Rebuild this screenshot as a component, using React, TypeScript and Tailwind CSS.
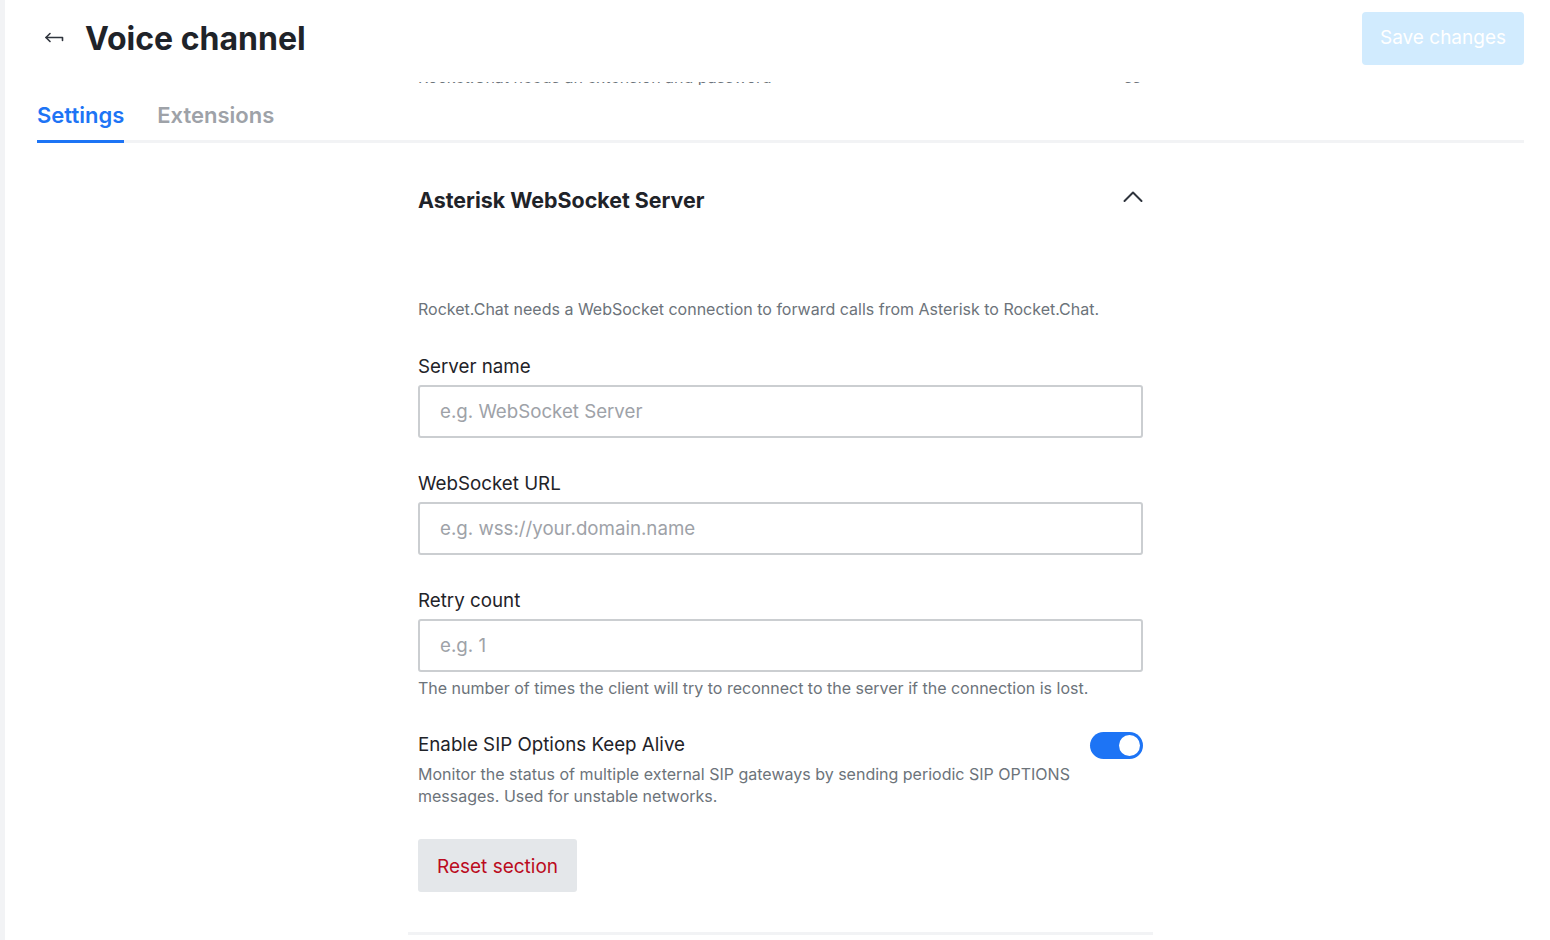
import React from "react";

function Field({ label, placeholder }: { label: string; placeholder: string }) {
  return (
    <div className="flex flex-col">
      <label className="text-[18.75px] leading-[24px] text-[#1f2329]">{label}</label>
      <div className="mt-[6px] h-[53px] rounded-[3px] border-2 border-[#cbced1] flex items-center px-[20px]">
        <span className="text-[18.7px] text-[#9ea2a8] mt-[2px]">{placeholder}</span>
      </div>
    </div>
  );
}

export default function App() {
  return (
    <div
      className="flex w-[1550px] h-[940px] bg-white overflow-hidden"
      style={{ fontFamily: "Inter, 'Noto Sans', sans-serif" }}
    >
      <div className="w-[5px] shrink-0 bg-[#f2f3f5]" />
      <div className="flex-1 flex flex-col pl-[32px] pr-[26px]">
        {/* header */}
        <div className="flex items-center justify-between pt-[12px]">
          <div className="flex items-center h-[53px]">
            <svg width="24" height="24" viewBox="0 0 24 24" className="ml-[6px]" fill="none" stroke="#2f343d" strokeWidth="1.6" strokeLinecap="round" strokeLinejoin="round">
              <path d="M3 10.5h16.5v3" />
              <path d="M7 6.5l-4 4 4 4" />
            </svg>
            <h1 className="ml-[18px] text-[32px] font-bold text-[#1f2329] leading-none">Voice channel</h1>
          </div>
          <button className="h-[53px] w-[162px] rounded-[4px] bg-[#d1ebfe] text-white text-[19px]">
            Save changes
          </button>
        </div>
        {/* clipped scrolled text */}
        <div className="flex justify-center">
          <div className="w-[725px] h-[3px] mt-[17px] overflow-hidden flex justify-between">
            <div className="-mt-[15px] text-[16px] leading-[20px] text-[#6c737a]">
              Rocket.Chat needs an extension and password
            </div>
            <div className="-mt-[15px] text-[16px] leading-[20px] text-[#6c737a] pr-[2px]">ss</div>
          </div>
        </div>
        {/* tabs */}
        <div className="flex items-end border-b-[3px] border-[#f2f3f5] mt-[16px]">
          <div className="pb-[11px] border-b-[3px] border-[#1d74f5] -mb-[3px] text-[22px] font-semibold text-[#1d74f5] leading-[28px]">
            Settings
          </div>
          <div className="ml-[33px] pb-[11px] text-[22px] font-semibold text-[#9ea2a8] leading-[28px]">
            Extensions
          </div>
        </div>
        {/* content */}
        <div className="flex justify-center">
          <div className="w-[725px] flex flex-col">
            <div className="flex items-center justify-between mt-[43px]">
              <h2 className="text-[21.4px] font-bold text-[#1f2329] leading-[28px]">Asterisk WebSocket Server</h2>
              <svg width="24" height="24" viewBox="0 0 24 24" fill="none" stroke="#2f343d" strokeWidth="2" strokeLinecap="round" strokeLinejoin="round" className="-mr-[2px] -mt-[5px]">
                <path d="M3.5 15l8.5-8.5 8.5 8.5" />
              </svg>
            </div>
            <p className="mt-[84px] text-[16px] leading-[22px] text-[#6c737a]">
              Rocket.Chat needs a WebSocket connection to forward calls from Asterisk to Rocket.Chat.
            </p>
            <div className="mt-[35px]">
              <Field label="Server name" placeholder="e.g. WebSocket Server" />
            </div>
            <div className="mt-[34px]">
              <Field label="WebSocket URL" placeholder="e.g. wss://your.domain.name" />
            </div>
            <div className="mt-[34px]">
              <Field label="Retry count" placeholder="e.g. 1" />
              <p className="mt-[5px] text-[16px] leading-[22px] text-[#6c737a]">
                The number of times the client will try to reconnect to the server if the connection is lost.
              </p>
            </div>
            <div className="mt-[34px] flex justify-between items-start">
              <div className="flex flex-col">
                <span className="text-[18.75px] leading-[24px] text-[#1f2329]">Enable SIP Options Keep Alive</span>
                <span className="mt-[6px] w-[670px] text-[16px] leading-[22px] text-[#6c737a]">
                  Monitor the status of multiple external SIP gateways by sending periodic SIP OPTIONS messages. Used for unstable networks.
                </span>
              </div>
              <div className="w-[53px] h-[27px] rounded-full bg-[#1d74f5] flex items-center justify-end pr-[3px] mt-[-1px]">
                <div className="w-[21px] h-[21px] rounded-full bg-white" />
              </div>
            </div>
            <div className="mt-[32px]">
              <button className="h-[53px] w-[159px] rounded-[3px] bg-[#e4e7ea] text-[19px] text-[#bb0b21] pt-[3px]">
                Reset section
              </button>
            </div>
            <div className="mt-[40px] -mx-[10px] h-[3px] bg-[#f2f3f5]" />
          </div>
        </div>
      </div>
    </div>
  );
}
